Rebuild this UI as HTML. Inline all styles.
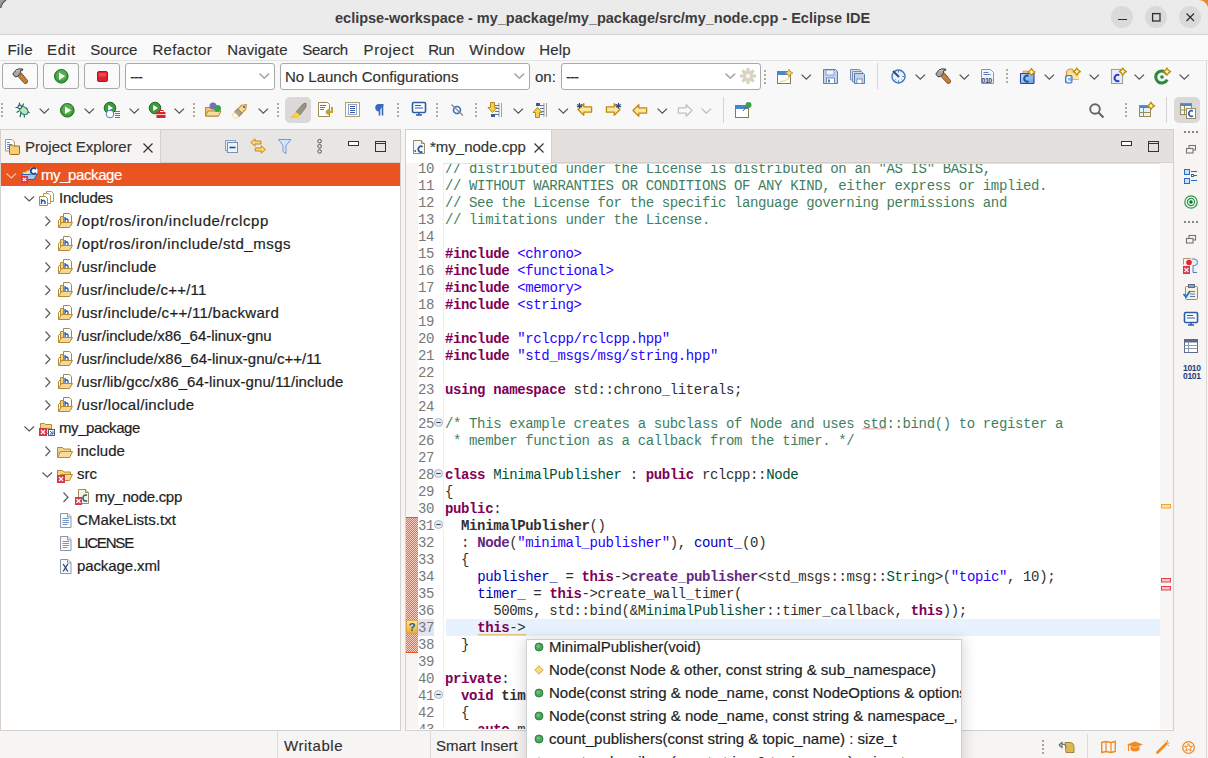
<!DOCTYPE html>
<html><head><meta charset="utf-8"><style>
*{margin:0;padding:0;box-sizing:border-box}
html,body{width:1208px;height:758px;overflow:hidden;background:#f6f5f4;font-family:"Liberation Sans",sans-serif;color:#303030}
.a{position:absolute}
svg{position:absolute;overflow:visible}
.ui{font-size:15px;white-space:nowrap;position:absolute;-webkit-text-stroke:0.15px currentColor}
.wb{width:22px;height:22px;border-radius:11px;background:#dadada;position:absolute}
.code{font-family:"Liberation Mono",monospace;font-size:14px;letter-spacing:-0.374px;white-space:pre;line-height:17px}
.cm{color:#3f7f5f}.kw{color:#7f0055;font-weight:bold}.st{color:#2a00ff}.fd{color:#0000c0}.cl{color:#005032}.fn{color:#642880;font-weight:bold}.b{font-weight:bold}.ln{color:#787878}
.tr{position:absolute;font-size:15px;white-space:nowrap;color:#1e1e1e;-webkit-text-stroke:0.2px currentColor}
</style></head><body>

<div class="a" style="left:0;top:0;width:1208px;height:35px;background:#ebebeb;border-bottom:1px solid #d4d4d4"></div>
<div class="a" style="left:335px;top:10px;font-weight:bold;font-size:14.5px;color:#3d3d3d;white-space:nowrap">eclipse-workspace - my_package/my_package/src/my_node.cpp - Eclipse IDE</div>
<div class="wb" style="left:1111px;top:6px"></div>
<div class="wb" style="left:1145px;top:6px"></div>
<div class="wb" style="left:1179px;top:6px"></div>

<div class="a" style="left:1118px;top:19px;width:9px;height:1.3px;background:#2e2e2e"></div>
<svg style="left:1152px;top:13px" width="9" height="9" viewBox="0 0 9 9"><rect x="0.6" y="0.6" width="7.4" height="7.4" fill="none" stroke="#2e2e2e" stroke-width="1.3"/></svg>
<svg style="left:1186px;top:13px" width="9" height="9" viewBox="0 0 9 9"><path d="M0.5,0.5 L8,8 M8,0.5 L0.5,8" stroke="#2e2e2e" stroke-width="1.2"/></svg>
<svg style="left:1199px;top:0px" width="9" height="8" viewBox="0 0 9 8"><path d="M0,0 Q6,0 9,7 V0z" fill="#e8872a"/></svg>
<svg style="left:0px;top:0px" width="7" height="9" viewBox="0 0 7 9"><path d="M0,0 H6 Q1.5,3 0.8,8 H0z" fill="#9aa0a6"/><path d="M6,0 Q1.5,3 0.8,8" fill="none" stroke="#4a4e52" stroke-width="1.2"/></svg>
<div class="a" style="left:0;top:35px;width:1208px;height:94px;background:#f8f8f8"></div>
<div class="a" style="left:0;top:35px;width:1208px;height:26px;background:#fafafa;border-bottom:1px solid #e4e4e4"></div>
<div class="ui" style="left:7.4px;top:41px;letter-spacing:0.310px">File</div><div class="ui" style="left:47.1px;top:41px;letter-spacing:0.751px">Edit</div><div class="ui" style="left:90.3px;top:41px;letter-spacing:-0.105px">Source</div><div class="ui" style="left:152.4px;top:41px;letter-spacing:0.373px">Refactor</div><div class="ui" style="left:227.2px;top:41px;letter-spacing:0.157px">Navigate</div><div class="ui" style="left:302.2px;top:41px;letter-spacing:-0.305px">Search</div><div class="ui" style="left:363.6px;top:41px;letter-spacing:0.553px">Project</div><div class="ui" style="left:428.2px;top:41px;letter-spacing:-0.609px">Run</div><div class="ui" style="left:469.2px;top:41px;letter-spacing:0.430px">Window</div><div class="ui" style="left:539.2px;top:41px;letter-spacing:0.217px">Help</div>
<div class="a" style="left:2px;top:63px;width:36px;height:26px;border:1px solid #a9a9a9;border-radius:3px;background:#fafafa"></div>
<svg style="left:12px;top:68px" width="16" height="16" viewBox="0 0 16 16">
<path d="M5.8,8.2 L9.4,5 L15.6,12.6 Q16,15.8 12.6,15.6 z" fill="#c08040" stroke="#7a4a17" stroke-width="0.9" stroke-linejoin="round"/>
<path d="M0.8,6 L4,2 Q6.5,0.3 10.5,1 L11,2 L8.8,2.6 L8.2,5.6 L5.2,8.5 L3,8.8 z" fill="#a8a8a8" stroke="#3c3c3c" stroke-width="1" stroke-linejoin="round"/>
<path d="M4,3 L7.5,2" stroke="#e0e0e0" stroke-width="0.8"/></svg>
<div class="a" style="left:43px;top:63px;width:36px;height:26px;border:1px solid #a9a9a9;border-radius:3px;background:#fafafa"></div>
<svg style="left:53.7px;top:68.7px" width="14.6" height="14.6" viewBox="0 0 14.6 14.6">
<circle cx="7.3" cy="7.3" r="6.8" fill="#3a9a3a" stroke="#1f6b2a" stroke-width="1"/>
<circle cx="7.3" cy="6.3" r="5.1" fill="#55b04a"/>
<path d="M5.0,3.5 L11.1,7.3 L5.0,11.1 z" fill="#fff"/></svg>
<div class="a" style="left:84px;top:63px;width:36px;height:26px;border:1px solid #a9a9a9;border-radius:3px;background:#fafafa"></div>
<svg style="left:97px;top:71px" width="12" height="12" viewBox="0 0 12 12"><rect x="0.5" y="0.5" width="10" height="10" rx="1.5" fill="#e0202f" stroke="#b8101c"/><rect x="2" y="2" width="7" height="3.5" fill="#f06070" opacity="0.6"/></svg>
<div class="a" style="left:125px;top:63px;width:150px;height:27px;border:1px solid #a9a9a9;border-radius:3px;background:#fff"></div><div class="ui" style="left:130px;top:68px;color:#303030;letter-spacing:-1px">---</div><svg style="left:259px;top:73px" width="11" height="6" viewBox="0 0 11 6"><polyline points="0.6,0.6 5.3,5.2 10,0.6" fill="none" stroke="#a8a8a8" stroke-width="1.6"/></svg>
<div class="a" style="left:280px;top:63px;width:250px;height:27px;border:1px solid #a9a9a9;border-radius:3px;background:#fff"></div><div class="ui" style="left:285px;top:68px;color:#303030;letter-spacing:0">No Launch Configurations</div><svg style="left:514px;top:73px" width="11" height="6" viewBox="0 0 11 6"><polyline points="0.6,0.6 5.3,5.2 10,0.6" fill="none" stroke="#a8a8a8" stroke-width="1.6"/></svg>
<div class="ui" style="left:535px;top:68px;color:#303030">on:</div>
<div class="a" style="left:561px;top:63px;width:200px;height:27px;border:1px solid #a9a9a9;border-radius:3px;background:#fff"></div><div class="ui" style="left:566px;top:68px;color:#303030;letter-spacing:-1px">---</div><svg style="left:725px;top:73px" width="11" height="6" viewBox="0 0 11 6"><polyline points="0.6,0.6 5.3,5.2 10,0.6" fill="none" stroke="#a8a8a8" stroke-width="1.6"/></svg>
<svg style="left:740px;top:68px" width="16" height="16" viewBox="0 0 16 16"><g transform="translate(8,8)"><rect x="-1.6" y="-8" width="3.2" height="4" fill="#d8d2be" transform="rotate(0)"/><rect x="-1.6" y="-8" width="3.2" height="4" fill="#d8d2be" transform="rotate(45)"/><rect x="-1.6" y="-8" width="3.2" height="4" fill="#d8d2be" transform="rotate(90)"/><rect x="-1.6" y="-8" width="3.2" height="4" fill="#d8d2be" transform="rotate(135)"/><rect x="-1.6" y="-8" width="3.2" height="4" fill="#d8d2be" transform="rotate(180)"/><rect x="-1.6" y="-8" width="3.2" height="4" fill="#d8d2be" transform="rotate(225)"/><rect x="-1.6" y="-8" width="3.2" height="4" fill="#d8d2be" transform="rotate(270)"/><rect x="-1.6" y="-8" width="3.2" height="4" fill="#d8d2be" transform="rotate(315)"/><circle r="5.2" fill="#d8d2be"/><circle r="2.2" fill="#f6f5f4"/></g></svg>
<svg style="left:764px;top:70px" width="2" height="14" viewBox="0 0 2 14"><rect x="0" y="0" width="2" height="2" fill="#b5ab9a"/><rect x="0" y="4" width="2" height="2" fill="#b5ab9a"/><rect x="0" y="8" width="2" height="2" fill="#b5ab9a"/><rect x="0" y="12" width="2" height="2" fill="#b5ab9a"/></svg>
<svg style="left:777px;top:69px" width="16" height="15" viewBox="0 0 16 15">
<rect x="0.5" y="2.5" width="13" height="12" fill="#fff" stroke="#8a7a50"/>
<rect x="1" y="3" width="12" height="3" fill="#4a86d0"/>
<path d="M2,13 Q11,12 13,7" fill="none" stroke="#f0e0a0" stroke-width="1.5"/>
<path d="M12,0 L13.2,2.8 L16,4 L13.2,5.2 L12,8 L10.8,5.2 L8,4 L10.8,2.8z" fill="#f8e070" stroke="#b08a20" stroke-width="0.7"/></svg>
<svg style="left:801px;top:74px" width="11" height="6" viewBox="0 0 11 6"><polyline points="0.6,0.6 5.3,5.2 10,0.6" fill="none" stroke="#555" stroke-width="1.3"/></svg>
<svg style="left:823px;top:69px" width="15" height="15" viewBox="0 0 15 15">
<path d="M0.5,0.5 h12 l2,2 v12 h-14z" fill="#c4d4ec" stroke="#5a7fb5"/>
<rect x="3" y="1" width="8" height="5" fill="#eef2fa" stroke="#5a7fb5" stroke-width="0.6"/>
<rect x="3.5" y="9" width="8" height="5.5" fill="#fff" stroke="#5a7fb5" stroke-width="0.8"/>
<rect x="5" y="10.5" width="2" height="3" fill="#5a7fb5"/></svg>
<svg style="left:850px;top:69px" width="15" height="15" viewBox="0 0 15 15">
<path d="M0.5,0.5 h9 l1.5,1.5 v9 h-10.5z" fill="#d4e0f0" stroke="#7a90b5"/>
<path d="M2.5,2.5 h9 l1.5,1.5 v9 h-10.5z" fill="#d4e0f0" stroke="#7a90b5"/>
<path d="M4.5,4.5 h9 l1,1 v9 h-10z" fill="#c4d4ec" stroke="#5a7fb5"/>
<rect x="7" y="10" width="5" height="4.5" fill="#fff" stroke="#5a7fb5" stroke-width="0.8"/></svg>
<div class="a" style="left:877px;top:63px;width:1px;height:26px;background:#d8d4d0"></div>
<svg style="left:891px;top:69px" width="15" height="15" viewBox="0 0 15 15">
<circle cx="7.5" cy="7.5" r="6.5" fill="#eaf2fb" stroke="#3a78c0" stroke-width="1.4"/>
<path d="M2,2 L8,8" stroke="#2c4f7a" stroke-width="2"/>
<path d="M7.5,2 v1.5 M13,7.5 h-1.5 M7.5,13 v-1.5 M3.5,11.5 l1,-1 M11.5,11.5 l-1,-1" stroke="#3a78c0"/></svg>
<svg style="left:915px;top:74px" width="11" height="6" viewBox="0 0 11 6"><polyline points="0.6,0.6 5.3,5.2 10,0.6" fill="none" stroke="#555" stroke-width="1.3"/></svg>
<svg style="left:935px;top:68px" width="16" height="16" viewBox="0 0 16 16">
<path d="M5.8,8.2 L9.4,5 L15.6,12.6 Q16,15.8 12.6,15.6 z" fill="#c08040" stroke="#7a4a17" stroke-width="0.9" stroke-linejoin="round"/>
<path d="M0.8,6 L4,2 Q6.5,0.3 10.5,1 L11,2 L8.8,2.6 L8.2,5.6 L5.2,8.5 L3,8.8 z" fill="#a8a8a8" stroke="#3c3c3c" stroke-width="1" stroke-linejoin="round"/>
<path d="M4,3 L7.5,2" stroke="#e0e0e0" stroke-width="0.8"/></svg>
<svg style="left:959px;top:74px" width="11" height="6" viewBox="0 0 11 6"><polyline points="0.6,0.6 5.3,5.2 10,0.6" fill="none" stroke="#555" stroke-width="1.3"/></svg>
<svg style="left:981px;top:69px" width="15" height="15" viewBox="0 0 15 15">
<path d="M0.5,0.5 h9 l3,3 v11 h-12z" fill="#f2f5fa" stroke="#8d97a8"/>
<path d="M2.5,3.5 h5 M2.5,5.5 h7" stroke="#5a7fc0"/>
<text x="0.5" y="14" font-family="Liberation Sans" font-size="7" font-weight="bold" fill="#1c3f7a" letter-spacing="-0.5">010</text></svg>
<svg style="left:1006px;top:69px" width="2" height="14" viewBox="0 0 2 14"><rect x="0" y="0" width="2" height="2" fill="#b5ab9a"/><rect x="0" y="4" width="2" height="2" fill="#b5ab9a"/><rect x="0" y="8" width="2" height="2" fill="#b5ab9a"/><rect x="0" y="12" width="2" height="2" fill="#b5ab9a"/></svg>
<svg style="left:1020px;top:68px" width="16" height="16" viewBox="0 0 16 16">
<defs><linearGradient id="cpg" x1="0" y1="0" x2="1" y2="1"><stop offset="0" stop-color="#bfe0fa"/><stop offset="1" stop-color="#6a9ee8"/></linearGradient></defs>
<rect x="3" y="3" width="6" height="3" fill="#f0b8a0" stroke="#c08070" stroke-width="0.6"/>
<rect x="0.5" y="5.5" width="13.5" height="10" rx="0.8" fill="url(#cpg)" stroke="#2a40b0" stroke-width="1.1"/>
<path d="M0,5.6 h14.5" stroke="#5a3a8a" stroke-width="1"/><path d="M8.59,8.225 a2.6599999999999997,3.04 0 1 0 0,4.75" fill="none" stroke="#1a5a9a" stroke-width="2.0"/><path d="M11.5,0.3999999999999999 Q12.508000000000001,2.992 15.1,4 Q12.508000000000001,5.008 11.5,7.6 Q10.491999999999999,5.008 7.9,4 Q10.491999999999999,2.992 11.5,0.3999999999999999z" fill="#fff4b0" stroke="#b8900c" stroke-width="1.3" stroke-linejoin="round"/></svg>
<svg style="left:1044px;top:74px" width="11" height="6" viewBox="0 0 11 6"><polyline points="0.6,0.6 5.3,5.2 10,0.6" fill="none" stroke="#555" stroke-width="1.3"/></svg>
<svg style="left:1065px;top:68px" width="16" height="16" viewBox="0 0 16 16">
<path d="M1.5,3 q1.5,-2 4,-2 h2 l1,2 h5 v8.5 h-12z" fill="#f8d890" stroke="#d08a30" stroke-width="1"/>
<rect x="3" y="5" width="11" height="6.5" fill="#fbe2a8"/>
<rect x="0.5" y="7.5" width="6.5" height="7.5" rx="1" fill="#8ab4ec" stroke="#4a70c0"/><path d="M5.34,9.45 a1.9599999999999997,2.2399999999999998 0 1 0 0,3.5" fill="none" stroke="#fff" stroke-width="1.4"/><path d="M11.8,0.0 Q12.808000000000002,2.5919999999999996 15.4,3.6 Q12.808000000000002,4.6080000000000005 11.8,7.2 Q10.792,4.6080000000000005 8.200000000000001,3.6 Q10.792,2.5919999999999996 11.8,0.0z" fill="#fff4b0" stroke="#b8900c" stroke-width="1.3" stroke-linejoin="round"/></svg>
<svg style="left:1089px;top:74px" width="11" height="6" viewBox="0 0 11 6"><polyline points="0.6,0.6 5.3,5.2 10,0.6" fill="none" stroke="#555" stroke-width="1.3"/></svg>
<svg style="left:1111px;top:68px" width="16" height="16" viewBox="0 0 16 16">
<rect x="0.5" y="1.5" width="11" height="14" fill="#e8eefa" stroke="#a8a080" stroke-width="1.1"/><path d="M8.2,7.5 a2.8,3.2 0 1 0 0,5.0" fill="none" stroke="#2d3fc0" stroke-width="2.0"/><path d="M11.8,0.0 Q12.808000000000002,2.5919999999999996 15.4,3.6 Q12.808000000000002,4.6080000000000005 11.8,7.2 Q10.792,4.6080000000000005 8.200000000000001,3.6 Q10.792,2.5919999999999996 11.8,0.0z" fill="#fff4b0" stroke="#b8900c" stroke-width="1.3" stroke-linejoin="round"/></svg>
<svg style="left:1134px;top:74px" width="11" height="6" viewBox="0 0 11 6"><polyline points="0.6,0.6 5.3,5.2 10,0.6" fill="none" stroke="#555" stroke-width="1.3"/></svg>
<svg style="left:1155px;top:68px" width="16" height="16" viewBox="0 0 16 16">
<path d="M12.2,6.5 A6,6 0 1 0 12.2,11.5" fill="none" stroke="#2a8a3a" stroke-width="3"/>
<circle cx="7" cy="9" r="1.8" fill="#2a8a3a"/><path d="M12,0.0 Q13.008000000000001,2.5919999999999996 15.6,3.6 Q13.008000000000001,4.6080000000000005 12,7.2 Q10.991999999999999,4.6080000000000005 8.4,3.6 Q10.991999999999999,2.5919999999999996 12,0.0z" fill="#fff4b0" stroke="#b8900c" stroke-width="1.3" stroke-linejoin="round"/></svg>
<svg style="left:1179px;top:74px" width="11" height="6" viewBox="0 0 11 6"><polyline points="0.6,0.6 5.3,5.2 10,0.6" fill="none" stroke="#555" stroke-width="1.3"/></svg>
<div class="a" style="left:1206px;top:61px;width:1px;height:68px;background:#dcdad7"></div>
<svg style="left:1px;top:103px" width="2" height="14" viewBox="0 0 2 14"><rect x="0" y="0" width="2" height="2" fill="#b5ab9a"/><rect x="0" y="4" width="2" height="2" fill="#b5ab9a"/><rect x="0" y="8" width="2" height="2" fill="#b5ab9a"/><rect x="0" y="12" width="2" height="2" fill="#b5ab9a"/></svg>
<svg style="left:15px;top:102px" width="16" height="16" viewBox="0 0 16 16">
<path d="M4.5,4 V0.5 M7.5,4.5 L8.5,1.5 M3.5,5.5 H0.5 M4,9 L1.5,10.5 M6,10.5 L5,15 M9,12 L9.5,15.5 M10,6 L12.5,6.5 M12,9 L14.5,11" stroke="#2a6a4a" stroke-width="1.2"/>
<ellipse cx="8.8" cy="8.6" rx="4.6" ry="3.4" transform="rotate(40 8.8 8.6)" fill="#bfe6b0" stroke="#1f7a8a" stroke-width="1.1"/>
<circle cx="4.8" cy="5" r="1.9" fill="#cfe8d0" stroke="#1f6a7a" stroke-width="1.1"/></svg>
<svg style="left:39px;top:108px" width="11" height="6" viewBox="0 0 11 6"><polyline points="0.6,0.6 5.3,5.2 10,0.6" fill="none" stroke="#555" stroke-width="1.3"/></svg>
<svg style="left:60px;top:102.8px" width="14.6" height="14.6" viewBox="0 0 14.6 14.6">
<circle cx="7.3" cy="7.3" r="6.8" fill="#3a9a3a" stroke="#1f6b2a" stroke-width="1"/>
<circle cx="7.3" cy="6.3" r="5.1" fill="#55b04a"/>
<path d="M5.0,3.5 L11.1,7.3 L5.0,11.1 z" fill="#fff"/></svg>
<svg style="left:84px;top:108px" width="11" height="6" viewBox="0 0 11 6"><polyline points="0.6,0.6 5.3,5.2 10,0.6" fill="none" stroke="#555" stroke-width="1.3"/></svg>
<svg style="left:104px;top:102px" width="17" height="17" viewBox="0 0 17 17">
<circle cx="6" cy="6" r="5.8" fill="#3a9a3a" stroke="#1f6b2a"/>
<path d="M4.2,3 L9,6 L4.2,9z" fill="#fff"/>
<circle cx="6" cy="12" r="3.8" fill="#fff" stroke="#4a7ac0"/>
<path d="M11,9.5 h5 M11,11.5 h5 M11,13.5 h5 M11,15.5 h5" stroke="#4a7ac0"/></svg>
<svg style="left:129px;top:108px" width="11" height="6" viewBox="0 0 11 6"><polyline points="0.6,0.6 5.3,5.2 10,0.6" fill="none" stroke="#555" stroke-width="1.3"/></svg>
<svg style="left:149px;top:102px" width="17" height="17" viewBox="0 0 17 17">
<circle cx="6" cy="6" r="5.8" fill="#3a9a3a" stroke="#1f6b2a"/>
<path d="M4.2,3 L9,6 L4.2,9z" fill="#fff"/>
<rect x="7.5" y="10" width="9" height="6" fill="#e0202f"/>
<rect x="10" y="8.5" width="4" height="2" fill="none" stroke="#e0202f"/>
<path d="M7.5,12.5 h9" stroke="#fff" stroke-width="0.8"/></svg>
<svg style="left:174px;top:108px" width="11" height="6" viewBox="0 0 11 6"><polyline points="0.6,0.6 5.3,5.2 10,0.6" fill="none" stroke="#555" stroke-width="1.3"/></svg>
<svg style="left:193px;top:103px" width="2" height="14" viewBox="0 0 2 14"><rect x="0" y="0" width="2" height="2" fill="#b5ab9a"/><rect x="0" y="4" width="2" height="2" fill="#b5ab9a"/><rect x="0" y="8" width="2" height="2" fill="#b5ab9a"/><rect x="0" y="12" width="2" height="2" fill="#b5ab9a"/></svg>
<svg style="left:205px;top:102px" width="17" height="15" viewBox="0 0 17 15">
<path d="M0.5,5.5 h5 l1,1 h7 v7.5 h-13z" fill="#f0c870" stroke="#b78a2e"/>
<path d="M0.5,14 l2.5,-5 h13 l-2.5,5z" fill="#f7dc9c" stroke="#b78a2e"/>
<circle cx="8" cy="4" r="3.5" fill="#7a6ac0"/>
<circle cx="12.5" cy="6.5" r="3.5" fill="#3aa050"/></svg>
<svg style="left:232px;top:102px" width="17" height="16" viewBox="0 0 17 16">
<g transform="translate(-1,-1) scale(1.15) rotate(-45 8.5 8)">
<path d="M4,5.5 H12 L15.5,8 L12,10.5 H4z" fill="#f6d890" stroke="#c89030" stroke-width="0.9"/>
<rect x="3.5" y="5.3" width="4" height="5.4" fill="#a8a4a0" stroke="#8a7a5a" stroke-width="0.8"/>
<rect x="0" y="5.8" width="3.5" height="4.4" fill="#fffbe8" stroke="#e8d070" stroke-width="0.7"/>
<circle cx="12.5" cy="8" r="0.9" fill="#3a5aa0"/>
</g></svg>
<svg style="left:257.5px;top:108px" width="11" height="6" viewBox="0 0 11 6"><polyline points="0.6,0.6 5.3,5.2 10,0.6" fill="none" stroke="#555" stroke-width="1.3"/></svg>
<svg style="left:277px;top:103px" width="2" height="14" viewBox="0 0 2 14"><rect x="0" y="0" width="2" height="2" fill="#b5ab9a"/><rect x="0" y="4" width="2" height="2" fill="#b5ab9a"/><rect x="0" y="8" width="2" height="2" fill="#b5ab9a"/><rect x="0" y="12" width="2" height="2" fill="#b5ab9a"/></svg>
<div class="a" style="left:285px;top:97px;width:26px;height:26px;border-radius:5px;background:#dad9d8"></div>
<svg style="left:290px;top:102px" width="17" height="16" viewBox="0 0 17 16">
<path d="M6,10 L13,2 L16,1 L16,5 L10,13 z" fill="#9a9484" stroke="#7a7464" stroke-width="0.8"/>
<path d="M2,15 L6,10 L10,13 L7,15.5 z" fill="#f8d838" stroke="#d8b020" stroke-width="0.6"/>
<path d="M0,15.5 h8" stroke="#f0d020" stroke-width="1.2"/></svg>
<svg style="left:318px;top:102px" width="16" height="15" viewBox="0 0 16 15">
<path d="M0.5,0.5 h9 l2,2 v12 h-11z" fill="#fff" stroke="#9a8a5a"/>
<path d="M2,3.5 h6 M2,5.5 h5 M2,7.5 h4" stroke="#4a7ac0"/>
<path d="M14,5 v5 h-6 M8,10 l3,-2.5 M8,10 l3,2.5" fill="none" stroke="#c8a030" stroke-width="2"/></svg>
<svg style="left:345px;top:102px" width="15" height="15" viewBox="0 0 15 15">
<rect x="0.5" y="0.5" width="14" height="14" fill="#fbfaf4" stroke="#b0a070"/>
<rect x="3.5" y="2.5" width="8" height="10" fill="#fff" stroke="#7a90c0" stroke-width="0.8"/>
<path d="M5,4.5 h5 M5,6.5 h5 M5,8.5 h5 M5,10.5 h5" stroke="#3a5aa0" stroke-width="1"/></svg>
<svg style="left:375px;top:104px" width="9" height="12" viewBox="0 0 9 12">
<path d="M4.5,11.5 V0.8 M7.5,11.5 V0.8 M8.5,0.8 H4 A3,3 0 0 0 4,6.8 H4.5" fill="#3a6ac0" stroke="#3a6ac0" stroke-width="1.6"/></svg>
<svg style="left:397px;top:103px" width="2" height="14" viewBox="0 0 2 14"><rect x="0" y="0" width="2" height="2" fill="#b5ab9a"/><rect x="0" y="4" width="2" height="2" fill="#b5ab9a"/><rect x="0" y="8" width="2" height="2" fill="#b5ab9a"/><rect x="0" y="12" width="2" height="2" fill="#b5ab9a"/></svg>
<svg style="left:412px;top:102px" width="14" height="14" viewBox="0 0 14 14">
<rect x="0.5" y="0.5" width="13" height="10" rx="1.2" fill="#fff" stroke="#2a5fa8" stroke-width="1.6"/>
<path d="M3,3.5 h6 M3,6 h8" stroke="#2a5fa8" stroke-width="1.2"/>
<path d="M4,13 h6 M7,11 v2" stroke="#2a5fa8" stroke-width="1.6"/></svg>
<svg style="left:436px;top:103px" width="2" height="14" viewBox="0 0 2 14"><rect x="0" y="0" width="2" height="2" fill="#b5ab9a"/><rect x="0" y="4" width="2" height="2" fill="#b5ab9a"/><rect x="0" y="8" width="2" height="2" fill="#b5ab9a"/><rect x="0" y="12" width="2" height="2" fill="#b5ab9a"/></svg>
<svg style="left:451px;top:104px" width="13" height="12" viewBox="0 0 13 12">
<circle cx="6" cy="6" r="3.5" fill="none" stroke="#3a6ac0" stroke-width="1.6"/>
<path d="M0.5,0.5 L12,11.5" stroke="#8a8a8a" stroke-width="1.3"/></svg>
<svg style="left:475px;top:103px" width="2" height="14" viewBox="0 0 2 14"><rect x="0" y="0" width="2" height="2" fill="#b5ab9a"/><rect x="0" y="4" width="2" height="2" fill="#b5ab9a"/><rect x="0" y="8" width="2" height="2" fill="#b5ab9a"/><rect x="0" y="12" width="2" height="2" fill="#b5ab9a"/></svg>
<svg style="left:488px;top:102px" width="16" height="16" viewBox="0 0 16 16">
<path d="M11,1 v14 M13.5,1 v14" stroke="#8a8a8a" stroke-width="0.8"/>
<path d="M7,3.5 h4 M7,6.5 h4 M7,9.5 h4 M7,12.5 h4" stroke="#4a7ac0"/>
<path d="M2.5,0.5 h4 v5 h2.5 l-4.5,5 l-4.5,-5 h2.5z" fill="#f8d050" stroke="#b08a20"/>
<rect x="3" y="12" width="4" height="3" fill="#3a5a9a"/></svg>
<svg style="left:513px;top:108px" width="11" height="6" viewBox="0 0 11 6"><polyline points="0.6,0.6 5.3,5.2 10,0.6" fill="none" stroke="#555" stroke-width="1.3"/></svg>
<svg style="left:533px;top:102px" width="16" height="16" viewBox="0 0 16 16">
<path d="M11,1 v14 M13.5,1 v14" stroke="#8a8a8a" stroke-width="0.8"/>
<path d="M7,3.5 h4 M7,6.5 h4 M7,9.5 h4 M7,12.5 h4" stroke="#4a7ac0"/>
<path d="M2.5,15.5 h4 v-5 h2.5 l-4.5,-5 l-4.5,5 h2.5z" fill="#f8d050" stroke="#b08a20"/>
<rect x="3" y="1" width="4" height="3" fill="#3a5a9a"/></svg>
<svg style="left:558px;top:108px" width="11" height="6" viewBox="0 0 11 6"><polyline points="0.6,0.6 5.3,5.2 10,0.6" fill="none" stroke="#555" stroke-width="1.3"/></svg>
<svg style="left:577px;top:103px" width="16" height="13" viewBox="0 0 16 13"><path d="M1,6.5 L6.8,0.8 V3.8 H14.6 V9.2 H6.8 V12.2 Z" fill="#fbe6a0" stroke="#c08a10" stroke-width="1.3" stroke-linejoin="round"/><path d="M2.5,0 v5.5 M0,1.5 l5,2.5 M5,1.5 l-5,2.5" stroke="#2a4a7a" stroke-width="1.2"/></svg>
<svg style="left:605px;top:103px" width="16" height="13" viewBox="0 0 16 13"><path d="M15,6.5 L9.2,0.8 V3.8 H1.4 V9.2 H9.2 V12.2 Z" fill="#fbe6a0" stroke="#c08a10" stroke-width="1.3" stroke-linejoin="round"/><path d="M13.5,0 v5.5 M11,1.5 l5,2.5 M16,1.5 l-5,2.5" stroke="#2a4a7a" stroke-width="1.2"/></svg>
<svg style="left:632px;top:104px" width="16" height="13" viewBox="0 0 16 13"><path d="M1,6.5 L6.8,0.8 V3.8 H14.6 V9.2 H6.8 V12.2 Z" fill="#fbe6a0" stroke="#c08a10" stroke-width="1.3" stroke-linejoin="round"/></svg>
<svg style="left:657px;top:108px" width="11" height="6" viewBox="0 0 11 6"><polyline points="0.6,0.6 5.3,5.2 10,0.6" fill="none" stroke="#555" stroke-width="1.3"/></svg>
<svg style="left:677px;top:104px" width="16" height="13" viewBox="0 0 16 13"><path d="M15,6.5 L9.2,0.8 V3.8 H1.4 V9.2 H9.2 V12.2 Z" fill="#fafafa" stroke="#c0c0c0" stroke-width="1.3" stroke-linejoin="round"/></svg>
<svg style="left:701px;top:108px" width="11" height="6" viewBox="0 0 11 6"><polyline points="0.6,0.6 5.3,5.2 10,0.6" fill="none" stroke="#b8b8b8" stroke-width="1.3"/></svg>
<div class="a" style="left:723px;top:97px;width:1px;height:26px;background:#d8d4d0"></div>
<svg style="left:735px;top:102px" width="17" height="16" viewBox="0 0 17 16">
<rect x="0.5" y="3.5" width="13" height="12" fill="#fff" stroke="#8a7a50"/>
<rect x="1" y="4" width="12" height="3" fill="#4a86d0"/>
<path d="M8,9 L13,3" stroke="#555" stroke-width="1"/>
<circle cx="13.5" cy="3" r="3" fill="#3aa050"/></svg>
<svg style="left:1089px;top:103px" width="16" height="16" viewBox="0 0 16 16">
<circle cx="6" cy="6" r="4.8" fill="none" stroke="#666" stroke-width="1.9"/>
<path d="M9.5,9.5 L14.5,14.5" stroke="#666" stroke-width="2.2"/></svg>
<svg style="left:1125px;top:103px" width="2" height="14" viewBox="0 0 2 14"><rect x="0" y="0" width="2" height="2" fill="#b5ab9a"/><rect x="0" y="4" width="2" height="2" fill="#b5ab9a"/><rect x="0" y="8" width="2" height="2" fill="#b5ab9a"/><rect x="0" y="12" width="2" height="2" fill="#b5ab9a"/></svg>
<svg style="left:1139px;top:102px" width="16" height="16" viewBox="0 0 16 16">
<rect x="0.5" y="3.5" width="11" height="11" fill="#e6f0fa" stroke="#9a8a5a"/>
<rect x="1" y="4" width="10" height="2" fill="#4a86d0"/>
<path d="M0.5,10.5 h11 M4.5,6 v8.5" stroke="#9a8a5a"/><path d="M12,0.19999999999999973 Q13.008000000000001,2.792 15.6,3.8 Q13.008000000000001,4.808 12,7.4 Q10.991999999999999,4.808 8.4,3.8 Q10.991999999999999,2.792 12,0.19999999999999973z" fill="#fff4b0" stroke="#b8900c" stroke-width="1.3" stroke-linejoin="round"/></svg>
<div class="a" style="left:1166px;top:97px;width:1px;height:26px;background:#d8d4d0"></div>
<div class="a" style="left:1174px;top:97px;width:26px;height:26px;border-radius:5px;background:#dad9d8"></div>
<svg style="left:1180px;top:103px" width="17" height="16" viewBox="0 0 17 16">
<rect x="0.5" y="0.5" width="11" height="11" fill="#f0f6fc" stroke="#9a8a5a"/>
<rect x="1" y="1" width="10" height="2" fill="#4a86d0"/>
<path d="M0.5,7 h6 M4.5,3 v8.5" stroke="#9a8a5a"/>
<rect x="6.5" y="5.5" width="9" height="10" fill="#fff" stroke="#9a8a5a"/><path d="M12.98,8.25 a2.52,2.8800000000000003 0 1 0 0,4.5" fill="none" stroke="#2d5fb0" stroke-width="1.6"/></svg>

<div class="a" style="left:0;top:129px;width:401px;height:602px;background:#fff;border:1px solid #d5d0cc"></div>
<div class="a" style="left:1px;top:130px;width:399px;height:33px;background:#e8e6e4;border-bottom:1px solid #d5d0cc"></div>
<div class="a" style="left:1px;top:130px;width:160px;height:33px;background:#f5f4f2;border-right:1px solid #d5d0cc"></div>
<div class="ui" style="left:25px;top:138px;color:#333">Project Explorer</div>

<svg style="left:5px;top:139px" width="16" height="16" viewBox="0 0 16 16">
<path d="M0.5,0.5 h6.5 l2.5,2.5 v9 h-9z" fill="#fff" stroke="#a89a6a"/>
<path d="M2,3.5 h3 M2,5.5 h5 M2,7.5 h5 M2,9.5 h5" stroke="#5a80c8" stroke-width="0.9"/>
<path d="M4.5,6 h3 l1,1 h6 v7.5 q0,1 -1,1 h-8 q-1,0 -1,-1z" fill="#f6d070" stroke="#a8641a"/></svg>
<svg style="left:143px;top:143px" width="10" height="10" viewBox="0 0 10 10"><path d="M0.5,0.5 L9.5,9.5 M9.5,0.5 L0.5,9.5" stroke="#333" stroke-width="1.2"/></svg>
<svg style="left:225px;top:140px" width="14" height="14" viewBox="0 0 14 14">
<rect x="0.5" y="0.5" width="10" height="10" fill="#dcecfa" stroke="#8aa0c0"/>
<rect x="2.5" y="2.5" width="10" height="10" fill="#eaf4fc" stroke="#7a90b5"/>
<path d="M4.5,7.5 h6" stroke="#1f4f8f" stroke-width="1.6"/></svg>
<svg style="left:250px;top:138px" width="17" height="16" viewBox="0 0 17 16">
<path d="M0.8,4.5 L5,0.8 v2.2 h6 v3 h-6 v2.2z" fill="#f8d878" stroke="#c08a20" stroke-linejoin="round"/>
<path d="M15.5,11.5 L11.3,7.8 v2.2 h-6 v3 h6 v2.2z" fill="#f8d878" stroke="#c08a20" stroke-linejoin="round"/></svg>
<svg style="left:278px;top:139px" width="14" height="15" viewBox="0 0 14 15">
<path d="M0.5,0.5 h12.5 l-5,6 v8 l-3,-2 v-6z" fill="#cfe6fa" stroke="#7a9ac5"/></svg>
<svg style="left:317px;top:139px" width="6" height="15" viewBox="0 0 6 15"><circle cx="2.6" cy="2.2" r="1.8" fill="none" stroke="#444" stroke-width="0.9"/><circle cx="2.6" cy="7.3" r="1.8" fill="none" stroke="#444" stroke-width="0.9"/><circle cx="2.6" cy="12.4" r="1.8" fill="none" stroke="#444" stroke-width="0.9"/></svg>
<svg style="left:348px;top:141px" width="11" height="5" viewBox="0 0 11 5"><rect x="0.5" y="0.5" width="10" height="4" fill="#fff" stroke="#333" stroke-width="1"/></svg>
<svg style="left:375px;top:141px" width="11" height="11" viewBox="0 0 11 11"><rect x="0.5" y="0.5" width="10" height="10" fill="none" stroke="#333" stroke-width="1"/><path d="M0.5,2.5 h10" stroke="#333" stroke-width="1"/></svg>
<div class="a" style="left:1px;top:163px;width:399px;height:23px;background:#e95420"></div>
<svg style="left:6px;top:173px" width="11" height="6"><polyline points="0.5,0.5 5.25,5 10,0.5" fill="none" stroke="#f6c4ae" stroke-width="1.1"/></svg>
<svg style="left:21px;top:167px" width="17" height="16">
<path d="M2,5 h3 l1,-1.5 h5 v4 h-9z" fill="#f3dc9a" stroke="#c9a44c" stroke-width="0.8"/>
<path d="M1,7.5 h15 l-3,5 h-12z" fill="#9ec9f0" stroke="#2b64b0"/>
<rect x="0" y="9" width="7" height="7" fill="#d9364a"/><path d="M1.8,10.8 l3.4,3.4 M5.2,10.8 l-3.4,3.4" stroke="#fff" stroke-width="1.2"/>
<circle cx="12.5" cy="4" r="4" fill="#fff"/>
<path d="M15,2 a3,3 0 1 0 0,4" fill="none" stroke="#1e4f8f" stroke-width="2"/>
</svg>
<div class="tr" style="left:41px;top:166px;color:#ffffff;letter-spacing:-0.405px">my_package</div>
<svg style="left:24px;top:196px" width="11" height="6"><polyline points="0.5,0.5 5.25,5 10,0.5" fill="none" stroke="#555" stroke-width="1.1"/></svg>
<svg style="left:39px;top:191px" width="16" height="16">
<path d="M7.5,0.5 h5 l2,2 v8 h-7z" fill="#fff" stroke="#b99a55"/>
<path d="M4.5,2.5 h5 l2,2 v8 h-7z" fill="#fff" stroke="#b99a55"/>
<path d="M0.5,5.5 h6 l2,2 v7 h-8z" fill="#fff" stroke="#b78a2e"/>
<path d="M2.5,8 v5 M2.5,10.5 q2,-2 3.5,0 v2.5" fill="none" stroke="#2d5b9a" stroke-width="1.4"/>
</svg>
<div class="tr" style="left:59px;top:189px;color:#1e1e1e;letter-spacing:-0.259px">Includes</div>
<svg style="left:45px;top:216px" width="6" height="11"><polyline points="0.5,0.5 5,5.25 0.5,10" fill="none" stroke="#555" stroke-width="1.1"/></svg>
<svg style="left:58px;top:213px" width="16" height="16">
<path d="M2.5,3.5 h3 l1,1 h6 v8 h-10z" fill="#f0d48a" stroke="#b78a2e"/>
<path d="M5.5,0.5 h6 l2,2 v9 h-8z" fill="#fff" stroke="#9c8a5a"/>
<path d="M7,4 v6 M7,7 q2,-2 3,0 v3" fill="none" stroke="#2d5b9a" stroke-width="1.3"/>
<path d="M0.5,14.5 l3,-5 h11 l-3,5z" fill="#f3d898" stroke="#b78a2e"/>
<path d="M0.5,14.5 v-7 l2,-2" fill="none" stroke="#b78a2e"/>
</svg>
<div class="tr" style="left:77px;top:212px;color:#1e1e1e;letter-spacing:0.601px">/opt/ros/iron/include/rclcpp</div>
<svg style="left:45px;top:239px" width="6" height="11"><polyline points="0.5,0.5 5,5.25 0.5,10" fill="none" stroke="#555" stroke-width="1.1"/></svg>
<svg style="left:58px;top:236px" width="16" height="16">
<path d="M2.5,3.5 h3 l1,1 h6 v8 h-10z" fill="#f0d48a" stroke="#b78a2e"/>
<path d="M5.5,0.5 h6 l2,2 v9 h-8z" fill="#fff" stroke="#9c8a5a"/>
<path d="M7,4 v6 M7,7 q2,-2 3,0 v3" fill="none" stroke="#2d5b9a" stroke-width="1.3"/>
<path d="M0.5,14.5 l3,-5 h11 l-3,5z" fill="#f3d898" stroke="#b78a2e"/>
<path d="M0.5,14.5 v-7 l2,-2" fill="none" stroke="#b78a2e"/>
</svg>
<div class="tr" style="left:77px;top:235px;color:#1e1e1e;letter-spacing:0.491px">/opt/ros/iron/include/std_msgs</div>
<svg style="left:45px;top:262px" width="6" height="11"><polyline points="0.5,0.5 5,5.25 0.5,10" fill="none" stroke="#555" stroke-width="1.1"/></svg>
<svg style="left:58px;top:259px" width="16" height="16">
<path d="M2.5,3.5 h3 l1,1 h6 v8 h-10z" fill="#f0d48a" stroke="#b78a2e"/>
<path d="M5.5,0.5 h6 l2,2 v9 h-8z" fill="#fff" stroke="#9c8a5a"/>
<path d="M7,4 v6 M7,7 q2,-2 3,0 v3" fill="none" stroke="#2d5b9a" stroke-width="1.3"/>
<path d="M0.5,14.5 l3,-5 h11 l-3,5z" fill="#f3d898" stroke="#b78a2e"/>
<path d="M0.5,14.5 v-7 l2,-2" fill="none" stroke="#b78a2e"/>
</svg>
<div class="tr" style="left:77px;top:258px;color:#1e1e1e;letter-spacing:0.249px">/usr/include</div>
<svg style="left:45px;top:285px" width="6" height="11"><polyline points="0.5,0.5 5,5.25 0.5,10" fill="none" stroke="#555" stroke-width="1.1"/></svg>
<svg style="left:58px;top:282px" width="16" height="16">
<path d="M2.5,3.5 h3 l1,1 h6 v8 h-10z" fill="#f0d48a" stroke="#b78a2e"/>
<path d="M5.5,0.5 h6 l2,2 v9 h-8z" fill="#fff" stroke="#9c8a5a"/>
<path d="M7,4 v6 M7,7 q2,-2 3,0 v3" fill="none" stroke="#2d5b9a" stroke-width="1.3"/>
<path d="M0.5,14.5 l3,-5 h11 l-3,5z" fill="#f3d898" stroke="#b78a2e"/>
<path d="M0.5,14.5 v-7 l2,-2" fill="none" stroke="#b78a2e"/>
</svg>
<div class="tr" style="left:77px;top:281px;color:#1e1e1e;letter-spacing:0.204px">/usr/include/c++/11</div>
<svg style="left:45px;top:308px" width="6" height="11"><polyline points="0.5,0.5 5,5.25 0.5,10" fill="none" stroke="#555" stroke-width="1.1"/></svg>
<svg style="left:58px;top:305px" width="16" height="16">
<path d="M2.5,3.5 h3 l1,1 h6 v8 h-10z" fill="#f0d48a" stroke="#b78a2e"/>
<path d="M5.5,0.5 h6 l2,2 v9 h-8z" fill="#fff" stroke="#9c8a5a"/>
<path d="M7,4 v6 M7,7 q2,-2 3,0 v3" fill="none" stroke="#2d5b9a" stroke-width="1.3"/>
<path d="M0.5,14.5 l3,-5 h11 l-3,5z" fill="#f3d898" stroke="#b78a2e"/>
<path d="M0.5,14.5 v-7 l2,-2" fill="none" stroke="#b78a2e"/>
</svg>
<div class="tr" style="left:77px;top:304px;color:#1e1e1e;letter-spacing:0.286px">/usr/include/c++/11/backward</div>
<svg style="left:45px;top:331px" width="6" height="11"><polyline points="0.5,0.5 5,5.25 0.5,10" fill="none" stroke="#555" stroke-width="1.1"/></svg>
<svg style="left:58px;top:328px" width="16" height="16">
<path d="M2.5,3.5 h3 l1,1 h6 v8 h-10z" fill="#f0d48a" stroke="#b78a2e"/>
<path d="M5.5,0.5 h6 l2,2 v9 h-8z" fill="#fff" stroke="#9c8a5a"/>
<path d="M7,4 v6 M7,7 q2,-2 3,0 v3" fill="none" stroke="#2d5b9a" stroke-width="1.3"/>
<path d="M0.5,14.5 l3,-5 h11 l-3,5z" fill="#f3d898" stroke="#b78a2e"/>
<path d="M0.5,14.5 v-7 l2,-2" fill="none" stroke="#b78a2e"/>
</svg>
<div class="tr" style="left:77px;top:327px;color:#1e1e1e;letter-spacing:-0.047px">/usr/include/x86_64-linux-gnu</div>
<svg style="left:45px;top:354px" width="6" height="11"><polyline points="0.5,0.5 5,5.25 0.5,10" fill="none" stroke="#555" stroke-width="1.1"/></svg>
<svg style="left:58px;top:351px" width="16" height="16">
<path d="M2.5,3.5 h3 l1,1 h6 v8 h-10z" fill="#f0d48a" stroke="#b78a2e"/>
<path d="M5.5,0.5 h6 l2,2 v9 h-8z" fill="#fff" stroke="#9c8a5a"/>
<path d="M7,4 v6 M7,7 q2,-2 3,0 v3" fill="none" stroke="#2d5b9a" stroke-width="1.3"/>
<path d="M0.5,14.5 l3,-5 h11 l-3,5z" fill="#f3d898" stroke="#b78a2e"/>
<path d="M0.5,14.5 v-7 l2,-2" fill="none" stroke="#b78a2e"/>
</svg>
<div class="tr" style="left:77px;top:350px;color:#1e1e1e;letter-spacing:-0.005px">/usr/include/x86_64-linux-gnu/c++/11</div>
<svg style="left:45px;top:377px" width="6" height="11"><polyline points="0.5,0.5 5,5.25 0.5,10" fill="none" stroke="#555" stroke-width="1.1"/></svg>
<svg style="left:58px;top:374px" width="16" height="16">
<path d="M2.5,3.5 h3 l1,1 h6 v8 h-10z" fill="#f0d48a" stroke="#b78a2e"/>
<path d="M5.5,0.5 h6 l2,2 v9 h-8z" fill="#fff" stroke="#9c8a5a"/>
<path d="M7,4 v6 M7,7 q2,-2 3,0 v3" fill="none" stroke="#2d5b9a" stroke-width="1.3"/>
<path d="M0.5,14.5 l3,-5 h11 l-3,5z" fill="#f3d898" stroke="#b78a2e"/>
<path d="M0.5,14.5 v-7 l2,-2" fill="none" stroke="#b78a2e"/>
</svg>
<div class="tr" style="left:77px;top:373px;color:#1e1e1e;letter-spacing:0.101px">/usr/lib/gcc/x86_64-linux-gnu/11/include</div>
<svg style="left:45px;top:400px" width="6" height="11"><polyline points="0.5,0.5 5,5.25 0.5,10" fill="none" stroke="#555" stroke-width="1.1"/></svg>
<svg style="left:58px;top:397px" width="16" height="16">
<path d="M2.5,3.5 h3 l1,1 h6 v8 h-10z" fill="#f0d48a" stroke="#b78a2e"/>
<path d="M5.5,0.5 h6 l2,2 v9 h-8z" fill="#fff" stroke="#9c8a5a"/>
<path d="M7,4 v6 M7,7 q2,-2 3,0 v3" fill="none" stroke="#2d5b9a" stroke-width="1.3"/>
<path d="M0.5,14.5 l3,-5 h11 l-3,5z" fill="#f3d898" stroke="#b78a2e"/>
<path d="M0.5,14.5 v-7 l2,-2" fill="none" stroke="#b78a2e"/>
</svg>
<div class="tr" style="left:77px;top:396px;color:#1e1e1e;letter-spacing:0.315px">/usr/local/include</div>
<svg style="left:24px;top:426px" width="11" height="6"><polyline points="0.5,0.5 5.25,5 10,0.5" fill="none" stroke="#555" stroke-width="1.1"/></svg>
<svg style="left:39px;top:420px" width="17" height="16">
<path d="M1.5,3.5 h4 l1,1 h6 v9 h-11z" fill="#f0d48a" stroke="#b78a2e"/>
<path d="M1.5,8.5 h11 v5 h-11z" fill="#f7dfa4" stroke="#b78a2e"/>
<rect x="0" y="8" width="8" height="8" fill="#d9364a"/><path d="M2,10 l4,4 M6,10 l-4,4" stroke="#fff" stroke-width="1.2"/>
<rect x="9.5" y="9.5" width="6" height="6" fill="#fff" stroke="#3b5f8f"/><path d="M11,11 l3,3 M11,14 h3 v-3" stroke="#3b5f8f" fill="none"/>
</svg>
<div class="tr" style="left:59px;top:419px;color:#1e1e1e;letter-spacing:-0.405px">my_package</div>
<svg style="left:45px;top:446px" width="6" height="11"><polyline points="0.5,0.5 5,5.25 0.5,10" fill="none" stroke="#555" stroke-width="1.1"/></svg>
<svg style="left:57px;top:444px" width="16" height="16">
<path d="M0.5,3.5 h5 l1.5,1.5 h6.5 v4 h-13z" fill="#f0d48a" stroke="#b78a2e"/>
<path d="M0.5,13.5 l3,-6 h12 l-3,6z" fill="#f7dc9c" stroke="#b78a2e"/>
<path d="M0.5,13.5 v-10" fill="none" stroke="#b78a2e"/></svg>
<div class="tr" style="left:77px;top:442px;color:#1e1e1e;letter-spacing:0.067px">include</div>
<svg style="left:42px;top:472px" width="11" height="6"><polyline points="0.5,0.5 5.25,5 10,0.5" fill="none" stroke="#555" stroke-width="1.1"/></svg>
<svg style="left:57px;top:467px" width="16" height="16">
<path d="M0.5,3.5 h5 l1.5,1.5 h6.5 v4 h-13z" fill="#f0d48a" stroke="#b78a2e"/>
<path d="M0.5,13.5 l3,-6 h12 l-3,6z" fill="#f7dc9c" stroke="#b78a2e"/>
<path d="M0.5,13.5 v-10" fill="none" stroke="#b78a2e"/><rect x="0" y="8" width="8" height="8" fill="#d9364a"/><path d="M2,10 l4,4 M6,10 l-4,4" stroke="#fff" stroke-width="1.2"/></svg>
<div class="tr" style="left:77px;top:465px;color:#1e1e1e;letter-spacing:0.002px">src</div>
<svg style="left:63px;top:492px" width="6" height="11"><polyline points="0.5,0.5 5,5.25 0.5,10" fill="none" stroke="#555" stroke-width="1.1"/></svg>
<svg style="left:75px;top:489px" width="16" height="16">
<path d="M3.5,0.5 h7 l3,3 v11 h-10z" fill="#f8f4e4" stroke="#9c8a5a"/>
<path d="M10.5,0.5 v3 h3" fill="#e8dcb0" stroke="#9c8a5a"/>
<path d="M12,6.5 a2.6,3 0 1 0 0,5" fill="none" stroke="#2d5b9a" stroke-width="1.6"/><rect x="0" y="8" width="7" height="8" fill="#d9364a"/><path d="M1.5,10 l4,4 M5.5,10 l-4,4" stroke="#fff" stroke-width="1.2"/></svg>
<div class="tr" style="left:95px;top:488px;color:#1e1e1e;letter-spacing:-0.278px">my_node.cpp</div>
<svg style="left:60px;top:513px" width="12" height="15">
<path d="M0.5,0.5 h7.5 l3,3 v11 h-10.5z" fill="#f8fafd" stroke="#8d97a8"/>
<path d="M7.5,0.5 v3.5 h3.5" fill="#e4e8f0" stroke="#8d97a8"/>
<path d="M2.5,5.5 h6.5 M2.5,7.5 h6.5 M2.5,9.5 h6.5 M2.5,11.5 h5" stroke="#6a88c0" stroke-width="0.9"/>
</svg>
<div class="tr" style="left:77px;top:511px;color:#1e1e1e;letter-spacing:0.046px">CMakeLists.txt</div>
<svg style="left:60px;top:536px" width="12" height="15">
<path d="M0.5,0.5 h7.5 l3,3 v11 h-10.5z" fill="#f8fafd" stroke="#8d97a8"/>
<path d="M7.5,0.5 v3.5 h3.5" fill="#e4e8f0" stroke="#8d97a8"/>
<path d="M2.5,5.5 h6.5 M2.5,7.5 h6.5 M2.5,9.5 h6.5 M2.5,11.5 h5" stroke="#6a88c0" stroke-width="0.9"/>
</svg>
<div class="tr" style="left:77px;top:534px;color:#1e1e1e;letter-spacing:-1.170px">LICENSE</div>
<svg style="left:60px;top:559px" width="12" height="15">
<path d="M0.5,0.5 h7.5 l3,3 v11 h-10.5z" fill="#f8fafd" stroke="#8d97a8"/>
<path d="M7.5,0.5 v3.5 h3.5" fill="#e4e8f0" stroke="#8d97a8"/>
<path d="M3.2,5 l4.6,7.5 M7.8,5 l-4.6,7.5" stroke="#2b3f6a" stroke-width="1.3"/>
</svg>
<div class="tr" style="left:77px;top:557px;color:#1e1e1e;letter-spacing:-0.110px">package.xml</div>

<div class="a" style="left:405px;top:129px;width:769px;height:602px;background:#fff;border:1px solid #d5d0cc"></div>
<div class="a" style="left:406px;top:130px;width:767px;height:33px;background:#e3e0dd;border-bottom:1px solid #d5d0cc"></div>
<div class="a" style="left:406px;top:130px;width:146px;height:34px;background:#fff;border-right:1px solid #d5d0cc"></div>
<div class="ui" style="left:430px;top:138px;color:#333">*my_node.cpp</div>

<!-- code area -->
<div class="a" style="left:406px;top:163px;width:754px;height:566px;overflow:hidden">
<div class="a" style="left:0;top:0;width:12px;height:566px;background:#f6f5f4"></div>
<div class="a" style="left:40px;top:456px;width:714px;height:17px;background:#e8f2fe"></div>
<div class="a" style="left:12px;top:456px;width:16px;height:17px;background:#e4e4f0"></div>
<div class="a" style="left:-406px;top:-163px;width:1208px;height:900px">
<div class="a code ln" style="left:418px;top:161px">10</div>
<div class="a code ln" style="left:418px;top:178px">11</div>
<div class="a code ln" style="left:418px;top:195px">12</div>
<div class="a code ln" style="left:418px;top:212px">13</div>
<div class="a code ln" style="left:418px;top:229px">14</div>
<div class="a code ln" style="left:418px;top:246px">15</div>
<div class="a code ln" style="left:418px;top:263px">16</div>
<div class="a code ln" style="left:418px;top:280px">17</div>
<div class="a code ln" style="left:418px;top:297px">18</div>
<div class="a code ln" style="left:418px;top:314px">19</div>
<div class="a code ln" style="left:418px;top:331px">20</div>
<div class="a code ln" style="left:418px;top:348px">21</div>
<div class="a code ln" style="left:418px;top:365px">22</div>
<div class="a code ln" style="left:418px;top:382px">23</div>
<div class="a code ln" style="left:418px;top:399px">24</div>
<div class="a code ln" style="left:418px;top:416px">25</div>
<div class="a code ln" style="left:418px;top:433px">26</div>
<div class="a code ln" style="left:418px;top:450px">27</div>
<div class="a code ln" style="left:418px;top:467px">28</div>
<div class="a code ln" style="left:418px;top:484px">29</div>
<div class="a code ln" style="left:418px;top:501px">30</div>
<div class="a code ln" style="left:418px;top:518px">31</div>
<div class="a code ln" style="left:418px;top:535px">32</div>
<div class="a code ln" style="left:418px;top:552px">33</div>
<div class="a code ln" style="left:418px;top:569px">34</div>
<div class="a code ln" style="left:418px;top:586px">35</div>
<div class="a code ln" style="left:418px;top:603px">36</div>
<div class="a code ln" style="left:418px;top:620px">37</div>
<div class="a code ln" style="left:418px;top:637px">38</div>
<div class="a code ln" style="left:418px;top:654px">39</div>
<div class="a code ln" style="left:418px;top:671px">40</div>
<div class="a code ln" style="left:418px;top:688px">41</div>
<div class="a code ln" style="left:418px;top:705px">42</div>
<div class="a code ln" style="left:418px;top:722px">43</div>
<div class="a code" style="left:445px;top:161px"><span class="cm">// distributed under the License is distributed on an "AS IS" BASIS,</span></div>
<div class="a code" style="left:445px;top:178px"><span class="cm">// WITHOUT WARRANTIES OR CONDITIONS OF ANY KIND, either express or implied.</span></div>
<div class="a code" style="left:445px;top:195px"><span class="cm">// See the License for the specific language governing permissions and</span></div>
<div class="a code" style="left:445px;top:212px"><span class="cm">// limitations under the License.</span></div>
<div class="a code" style="left:445px;top:229px"></div>
<div class="a code" style="left:445px;top:246px"><span class="kw">#include</span> <span class="st">&lt;chrono&gt;</span></div>
<div class="a code" style="left:445px;top:263px"><span class="kw">#include</span> <span class="st">&lt;functional&gt;</span></div>
<div class="a code" style="left:445px;top:280px"><span class="kw">#include</span> <span class="st">&lt;memory&gt;</span></div>
<div class="a code" style="left:445px;top:297px"><span class="kw">#include</span> <span class="st">&lt;string&gt;</span></div>
<div class="a code" style="left:445px;top:314px"></div>
<div class="a code" style="left:445px;top:331px"><span class="kw">#include</span> <span class="st">"rclcpp/rclcpp.hpp"</span></div>
<div class="a code" style="left:445px;top:348px"><span class="kw">#include</span> <span class="st">"std_msgs/msg/string.hpp"</span></div>
<div class="a code" style="left:445px;top:365px"></div>
<div class="a code" style="left:445px;top:382px"><span class="kw">using</span> <span class="kw">namespace</span> std::chrono_literals;</div>
<div class="a code" style="left:445px;top:399px"></div>
<div class="a code" style="left:445px;top:416px"><span class="cm">/* This example creates a subclass of Node and uses std::bind() to register a</span></div>
<div class="a code" style="left:445px;top:433px"><span class="cm"> * member function as a callback from the timer. */</span></div>
<div class="a code" style="left:445px;top:450px"></div>
<div class="a code" style="left:445px;top:467px"><span class="kw">class</span> <span class="cl">MinimalPublisher</span> : <span class="kw">public</span> rclcpp::<span class="cl">Node</span></div>
<div class="a code" style="left:445px;top:484px">{</div>
<div class="a code" style="left:445px;top:501px"><span class="kw">public</span>:</div>
<div class="a code" style="left:445px;top:518px">  <span class="b">MinimalPublisher</span>()</div>
<div class="a code" style="left:445px;top:535px">  : <span class="fn">Node</span>(<span class="st">"minimal_publisher"</span>), <span class="fd">count_</span>(0)</div>
<div class="a code" style="left:445px;top:552px">  {</div>
<div class="a code" style="left:445px;top:569px">    <span class="fd">publisher_</span> = <span class="kw">this</span>-&gt;<span class="fn">create_publisher</span>&lt;std_msgs::msg::<span class="cl">String</span>&gt;(<span class="st">"topic"</span>, 10);</div>
<div class="a code" style="left:445px;top:586px">    <span class="fd">timer_</span> = <span class="kw">this</span>-&gt;create_wall_timer(</div>
<div class="a code" style="left:445px;top:603px">      500ms, std::bind(&amp;<span class="cl">MinimalPublisher</span>::timer_callback, <span class="kw">this</span>));</div>
<div class="a code" style="left:445px;top:620px">    <span class="kw">this</span>-&gt;</div>
<div class="a code" style="left:445px;top:637px">  }</div>
<div class="a code" style="left:445px;top:654px"></div>
<div class="a code" style="left:445px;top:671px"><span class="kw">private</span>:</div>
<div class="a code" style="left:445px;top:688px">  <span class="kw">void</span> <span class="b">timer_callback</span>()</div>
<div class="a code" style="left:445px;top:705px">  {</div>
<div class="a code" style="left:445px;top:722px">    <span class="kw">auto</span> message = std_msgs::msg::String();</div>
</div></div>


<svg style="left:413px;top:140px" width="12" height="14" viewBox="0 0 12 14">
<path d="M0.5,0.5 h8 l3,3 v10 h-11z" fill="#f4f6fb" stroke="#9c8a5a"/>
<path d="M8.5,0.5 v3 h3" fill="#e8dcb0" stroke="#9c8a5a"/>
<circle cx="2.2" cy="11" r="0.9" fill="#2d5b9a"/>
<path d="M9.5,6.8 a2.6,3 0 1 0 0,4.8" fill="none" stroke="#2d5b9a" stroke-width="1.7"/></svg>
<svg style="left:534px;top:143px" width="10" height="10" viewBox="0 0 10 10"><path d="M0.5,0.5 L9.5,9.5 M9.5,0.5 L0.5,9.5" stroke="#333" stroke-width="1.2"/></svg>
<svg style="left:1121px;top:141px" width="11" height="5" viewBox="0 0 11 5"><rect x="0.5" y="0.5" width="10" height="4" fill="#fff" stroke="#333" stroke-width="1"/></svg>
<svg style="left:1148px;top:141px" width="11" height="11" viewBox="0 0 11 11"><rect x="0.5" y="0.5" width="10" height="10" fill="none" stroke="#333" stroke-width="1"/><path d="M0.5,2.5 h10" stroke="#333" stroke-width="1"/></svg>
<svg style="left:406px;top:517px" width="12" height="136" viewBox="0 0 12 136"><defs><pattern id="hp" width="2" height="2" patternUnits="userSpaceOnUse"><rect width="2" height="2" fill="#fbd0c0"/><rect width="1" height="1" fill="#ec6a40"/><rect x="1" y="1" width="1" height="1" fill="#ec6a40"/></pattern></defs><rect x="0" y="0" width="12" height="136" fill="url(#hp)"/><rect x="0" y="0" width="12" height="1" fill="#e95420"/><rect x="0" y="135" width="12" height="1" fill="#e95420"/></svg>
<svg style="left:406px;top:620px" width="12" height="14" viewBox="0 0 12 14"><defs><linearGradient id="qg" x1="0" y1="0" x2="0" y2="1"><stop offset="0" stop-color="#fde7a0"/><stop offset="0.5" stop-color="#f8c860"/><stop offset="1" stop-color="#f0a830"/></linearGradient></defs><rect x="0.5" y="0.5" width="11" height="13" fill="url(#qg)" stroke="#d8a040" stroke-width="0.8"/><text x="2.6" y="11" font-family="Liberation Sans" font-weight="bold" font-size="11.5" fill="#2a5a9a">?</text></svg>
<svg style="left:434px;top:418px" width="9" height="9" viewBox="0 0 9 9"><circle cx="4.5" cy="4.5" r="4" fill="#e8eef6" stroke="#a0aab8" stroke-width="0.9"/><path d="M2.3,4.5 h4.4" stroke="#3a4658" stroke-width="1.1"/></svg>
<svg style="left:434px;top:469px" width="9" height="9" viewBox="0 0 9 9"><circle cx="4.5" cy="4.5" r="4" fill="#e8eef6" stroke="#a0aab8" stroke-width="0.9"/><path d="M2.3,4.5 h4.4" stroke="#3a4658" stroke-width="1.1"/></svg>
<svg style="left:434px;top:520px" width="9" height="9" viewBox="0 0 9 9"><circle cx="4.5" cy="4.5" r="4" fill="#e8eef6" stroke="#a0aab8" stroke-width="0.9"/><path d="M2.3,4.5 h4.4" stroke="#3a4658" stroke-width="1.1"/></svg>
<svg style="left:434px;top:690px" width="9" height="9" viewBox="0 0 9 9"><circle cx="4.5" cy="4.5" r="4" fill="#e8eef6" stroke="#a0aab8" stroke-width="0.9"/><path d="M2.3,4.5 h4.4" stroke="#3a4658" stroke-width="1.1"/></svg>
<div class="a" style="left:443px;top:163px;width:1px;height:566px;background:#f0f0f0"></div>
<div class="a" style="left:443px;top:163px;width:717px;height:1px;background:#e2e2e2"></div>
<div class="a" style="left:1160px;top:163px;width:13px;height:566px;background:#f7f6f5"></div>
<svg style="left:1161px;top:504px" width="10" height="5" viewBox="0 0 10 5"><rect x="0.5" y="0.5" width="9" height="3.5" fill="#fde3a0" stroke="#f0a830"/></svg>
<svg style="left:1161px;top:578px" width="10" height="5" viewBox="0 0 10 5"><rect x="0.5" y="0.5" width="9" height="3.5" fill="#f8c8c8" stroke="#e84050"/></svg>
<svg style="left:1161px;top:586px" width="10" height="5" viewBox="0 0 10 5"><rect x="0.5" y="0.5" width="9" height="3.5" fill="#f8c8c8" stroke="#e84050"/></svg>
<svg style="left:862px;top:428px" width="24" height="2" viewBox="0 0 24 2"><polyline points="0,0.0 1,1.5 2,0.0 3,1.5 4,0.0 5,1.5 6,0.0 7,1.5 8,0.0 9,1.5 10,0.0 11,1.5 12,0.0 13,1.5 14,0.0 15,1.5 16,0.0 17,1.5 18,0.0 19,1.5 20,0.0 21,1.5 22,0.0 23,1.5 24,0.0" fill="none" stroke="#e8a0a0" stroke-width="0.8"/></svg>
<svg style="left:478px;top:634px" width="48" height="2" viewBox="0 0 48 2"><polyline points="0,0.0 1,1.5 2,0.0 3,1.5 4,0.0 5,1.5 6,0.0 7,1.5 8,0.0 9,1.5 10,0.0 11,1.5 12,0.0 13,1.5 14,0.0 15,1.5 16,0.0 17,1.5 18,0.0 19,1.5 20,0.0 21,1.5 22,0.0 23,1.5 24,0.0 25,1.5 26,0.0 27,1.5 28,0.0 29,1.5 30,0.0 31,1.5 32,0.0 33,1.5 34,0.0 35,1.5 36,0.0 37,1.5 38,0.0 39,1.5 40,0.0 41,1.5 42,0.0 43,1.5 44,0.0 45,1.5 46,0.0 47,1.5 48,0.0" fill="none" stroke="#e0b040" stroke-width="0.8"/></svg>
<div class="a" style="left:1206px;top:129px;width:1px;height:602px;background:#dcdad7"></div>
<svg style="left:1184px;top:131px" width="14" height="2" viewBox="0 0 14 2"><rect x="0" y="0" width="2" height="2" fill="#8a8580"/><rect x="4" y="0" width="2" height="2" fill="#8a8580"/><rect x="8" y="0" width="2" height="2" fill="#8a8580"/><rect x="12" y="0" width="2" height="2" fill="#8a8580"/></svg>
<svg style="left:1186px;top:145px" width="10" height="9" viewBox="0 0 10 9"><rect x="3" y="0.5" width="6.5" height="4.5" fill="none" stroke="#7a746e" stroke-width="1.1"/><rect x="0.5" y="3.5" width="6.5" height="4.5" fill="#f6f5f4" stroke="#7a746e" stroke-width="1.1"/></svg>
<svg style="left:1184px;top:169px" width="14" height="15" viewBox="0 0 14 15"><rect x="0.5" y="0.5" width="5" height="5" fill="#cde2f8" stroke="#2b6cc0"/><rect x="0.5" y="9.5" width="5" height="5" fill="#cde2f8" stroke="#2b6cc0"/><rect x="7.5" y="5.5" width="2" height="2" fill="#fff" stroke="#2b6cc0"/><path d="M7,2.5 h6 M10,6.5 h3 M7,11.5 h6" stroke="#2b6cc0" stroke-width="1.2"/></svg>
<svg style="left:1184px;top:195px" width="14" height="14" viewBox="0 0 14 14"><circle cx="7" cy="7" r="6.2" fill="none" stroke="#2a9a4a" stroke-width="1.2"/><circle cx="7" cy="7" r="3.6" fill="none" stroke="#2a9a4a" stroke-width="1.2"/><circle cx="7" cy="7" r="1.8" fill="#1a6a2a"/></svg>
<svg style="left:1184px;top:221px" width="14" height="2" viewBox="0 0 14 2"><rect x="0" y="0" width="2" height="2" fill="#8a8580"/><rect x="4" y="0" width="2" height="2" fill="#8a8580"/><rect x="8" y="0" width="2" height="2" fill="#8a8580"/><rect x="12" y="0" width="2" height="2" fill="#8a8580"/></svg>
<svg style="left:1186px;top:235px" width="10" height="9" viewBox="0 0 10 9"><rect x="3" y="0.5" width="6.5" height="4.5" fill="none" stroke="#7a746e" stroke-width="1.1"/><rect x="0.5" y="3.5" width="6.5" height="4.5" fill="#f6f5f4" stroke="#7a746e" stroke-width="1.1"/></svg>
<svg style="left:1183px;top:258px" width="15" height="16" viewBox="0 0 15 16"><path d="M0.5,0.5 h7" stroke="#a89a6a"/><path d="M0.5,0.5 v6" stroke="#a89a6a"/><circle cx="6" cy="4.5" r="2.8" fill="#e82030"/><rect x="0" y="8" width="7" height="8" fill="#d9364a"/><path d="M1.5,10 l4,4 M5.5,10 l-4,4" stroke="#fff" stroke-width="1.2"/><path d="M8.5,1 h3 q3,0 3,3.5 q0,3 -3,3 h-1.5 v7 h4" fill="#e4eefa" stroke="#5a7ab0" stroke-width="1"/></svg>
<svg style="left:1183px;top:284px" width="15" height="16" viewBox="0 0 15 16"><rect x="2.5" y="2.5" width="12" height="13" rx="1" fill="#f8f0dc" stroke="#b08a40"/><rect x="5.5" y="0.5" width="6" height="3" fill="#8aa0c0" stroke="#5a7090"/><path d="M7,7.5 h5 M7,10 h5 M7,12.5 h5" stroke="#5a7ab0"/><path d="M0.5,10 l2.5,3 l4,-6" fill="none" stroke="#1a7ac0" stroke-width="1.8"/></svg>
<svg style="left:1184px;top:312px" width="14" height="14" viewBox="0 0 14 14">
<rect x="0.5" y="0.5" width="13" height="10" rx="1.2" fill="#fff" stroke="#2a5fa8" stroke-width="1.6"/>
<path d="M3,3.5 h6 M3,6 h8" stroke="#2a5fa8" stroke-width="1.2"/>
<path d="M4,13 h6 M7,11 v2" stroke="#2a5fa8" stroke-width="1.6"/></svg>
<svg style="left:1184px;top:339px" width="14" height="14" viewBox="0 0 14 14"><rect x="0.5" y="0.5" width="13" height="13" fill="#fff" stroke="#5a6a8a"/><rect x="1" y="1" width="12" height="2.5" fill="#5a6a8a"/><path d="M0.5,6.5 h13 M0.5,9.5 h13 M4.5,3.5 v10" stroke="#8a9ab0"/></svg>
<div class="a" style="left:1183px;top:365px;font-family:'Liberation Sans';font-weight:bold;font-size:8.5px;line-height:7.5px;color:#1c3f7a;letter-spacing:-0.3px">1010<br>0101</div>

<div class="a" style="left:0;top:731px;width:1208px;height:27px;background:#f6f5f4"></div>
<div class="ui" style="left:284px;top:737px;letter-spacing:0.55px">Writable</div>
<div class="ui" style="left:436px;top:737px">Smart Insert</div>

<div class="a" style="left:277px;top:731px;width:1px;height:27px;background:#dcdad7"></div>
<div class="a" style="left:430px;top:731px;width:1px;height:27px;background:#dcdad7"></div>
<svg style="left:1042px;top:740px" width="2" height="14" viewBox="0 0 2 14"><rect x="0" y="0" width="2" height="2" fill="#aaa49a"/><rect x="0" y="4" width="2" height="2" fill="#aaa49a"/><rect x="0" y="8" width="2" height="2" fill="#aaa49a"/><rect x="0" y="12" width="2" height="2" fill="#aaa49a"/></svg>
<svg style="left:1058px;top:741px" width="18" height="12" viewBox="0 0 18 12"><path d="M7,1.5 h5 q4,0 4,5 v5 h-8z" fill="#e0b850" stroke="#8a7030" stroke-width="0.8"/><path d="M1,4 L4,1.5 L4,3 q4,0 4,4 M4,3 v3.5 L1,4" fill="#fff" stroke="#666" stroke-width="1.1"/></svg>
<div class="a" style="left:1087px;top:734px;width:1px;height:24px;background:#dcdad7"></div>
<svg style="left:1101px;top:741px" width="15" height="12" viewBox="0 0 15 12"><path d="M0.75,1.5 L5,0.5 L10,1.5 L14.25,0.5 V10.5 L10,11.5 L5,10.5 L0.75,11.5z" fill="none" stroke="#f08a24" stroke-width="1.4"/><path d="M5,0.5 v10 M10,1.5 v10" stroke="#f08a24" stroke-width="1.2"/></svg>
<svg style="left:1127px;top:741px" width="16" height="12" viewBox="0 0 16 12"><path d="M0,3.5 L8,0.5 L16,3.5 L8,6.5z" fill="#f08a24"/><path d="M3.5,5 v4 q4.5,3 9,0 v-4 L8,7z" fill="#f08a24"/><path d="M1.5,4 v6" stroke="#f08a24" stroke-width="1.2"/></svg>
<svg style="left:1156px;top:740px" width="14" height="14" viewBox="0 0 14 14"><path d="M1.5,12.5 L10.5,3.5" stroke="#f08a24" stroke-width="2.6" stroke-linecap="round"/><path d="M11.5,0 v2 M13.5,3 h-2 M8,0.5 l1,1 M13,6 l-1,-1" stroke="#f08a24" stroke-width="0.9"/></svg>
<svg style="left:1182px;top:741px" width="13" height="13" viewBox="0 0 13 13"><circle cx="6.5" cy="6.5" r="5.8" fill="none" stroke="#f08a24" stroke-width="1.3"/><path d="M6.5,2.5 L7.6,5.3 L10.5,5.4 L8.3,7.2 L9.1,10 L6.5,8.5 L3.9,10 L4.7,7.2 L2.5,5.4 L5.4,5.3z" fill="none" stroke="#f08a24" stroke-width="1"/></svg>
<div class="a" style="left:1206px;top:731px;width:1px;height:27px;background:#dcdad7"></div>
<div class="a" style="left:526px;top:639px;width:436px;height:140px;background:#fff;border:1px solid #cfcfcf;box-shadow:0 2px 12px 3px rgba(0,0,0,0.13)"></div>
<div class="a" style="left:527px;top:640px;width:434px;height:130px;overflow:hidden">
<svg style="left:7px;top:2px" width="10" height="10" viewBox="0 0 10 10"><circle cx="5" cy="5" r="4" fill="#4aa35a" stroke="#2a7a3a" stroke-width="0.9"/><circle cx="4.3" cy="4.2" r="1.8" fill="#8ad08a" opacity="0.6"/></svg>
<div class="tr" style="left:22px;top:-2px;color:#1e1e1e">MinimalPublisher(void)</div>
<svg style="left:7px;top:25px" width="10" height="10" viewBox="0 0 10 10"><path d="M5,0.8 L9.2,5 L5,9.2 L0.8,5z" fill="#f8da78" stroke="#c8a040" stroke-width="0.9"/></svg>
<div class="tr" style="left:22px;top:21px;color:#1e1e1e">Node(const Node &amp; other, const string &amp; sub_namespace)</div>
<svg style="left:7px;top:48px" width="10" height="10" viewBox="0 0 10 10"><circle cx="5" cy="5" r="4" fill="#4aa35a" stroke="#2a7a3a" stroke-width="0.9"/><circle cx="4.3" cy="4.2" r="1.8" fill="#8ad08a" opacity="0.6"/></svg>
<div class="tr" style="left:22px;top:44px;color:#1e1e1e">Node(const string &amp; node_name, const NodeOptions &amp; options)</div>
<svg style="left:7px;top:71px" width="10" height="10" viewBox="0 0 10 10"><circle cx="5" cy="5" r="4" fill="#4aa35a" stroke="#2a7a3a" stroke-width="0.9"/><circle cx="4.3" cy="4.2" r="1.8" fill="#8ad08a" opacity="0.6"/></svg>
<div class="tr" style="left:22px;top:67px;color:#1e1e1e">Node(const string &amp; node_name, const string &amp; namespace_, const NodeOptions &amp; options)</div>
<svg style="left:7px;top:94px" width="10" height="10" viewBox="0 0 10 10"><circle cx="5" cy="5" r="4" fill="#4aa35a" stroke="#2a7a3a" stroke-width="0.9"/><circle cx="4.3" cy="4.2" r="1.8" fill="#8ad08a" opacity="0.6"/></svg>
<div class="tr" style="left:22px;top:90px;color:#1e1e1e">count_publishers(const string &amp; topic_name) : size_t</div>
<svg style="left:7px;top:117px" width="10" height="10" viewBox="0 0 10 10"><circle cx="5" cy="5" r="4" fill="#4aa35a" stroke="#2a7a3a" stroke-width="0.9"/><circle cx="4.3" cy="4.2" r="1.8" fill="#8ad08a" opacity="0.6"/></svg>
<div class="tr" style="left:22px;top:113px;color:#1e1e1e">count_subscribers(const string &amp; topic_name) : size_t</div>
</div>
</body></html>
